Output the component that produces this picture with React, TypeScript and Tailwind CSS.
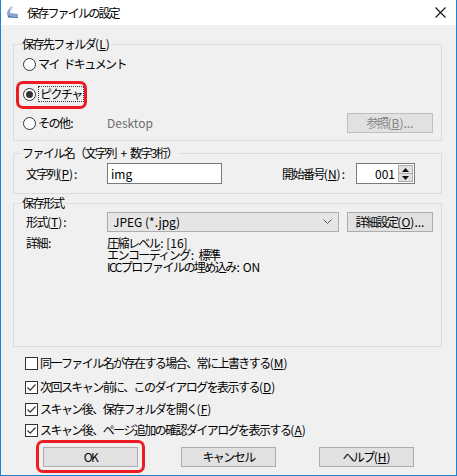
import React from 'react';

const Acc = ({ k }: { k: string }) => (
    <span className="tracking-normal">
        (<u className="underline underline-offset-[1px]">{k}</u>)
    </span>
);

const Colon = () => <span className="tracking-normal ml-[1px]">:</span>;

const Radio = ({ checked }: { checked?: boolean }) => (
    <span className="w-[13px] h-[13px] rounded-full border border-[#333] bg-white flex items-center justify-center shrink-0">
        {checked && <span className="w-[7px] h-[7px] rounded-full bg-[#333]" />}
    </span>
);

const Check = ({ checked }: { checked?: boolean }) => (
    <span className="w-[13px] h-[13px] border border-[#333] bg-white flex items-center justify-center shrink-0">
        {checked && (
            <svg width="11" height="11" viewBox="0 0 11 11">
                <path d="M1.5 5.5 L4.2 8.2 L9.5 2.5" fill="none" stroke="#333" strokeWidth="1.2" />
            </svg>
        )}
    </span>
);

const Btn = ({ children, className = '' }: { children: React.ReactNode; className?: string }) => (
    <button className={`h-[20px] border border-[#adadad] bg-[#e1e1e1] flex items-center justify-center text-[#000] ${className}`}>
        {children}
    </button>
);

const Legend = ({ children }: { children: React.ReactNode }) => (
    <legend className="ml-[7px] px-[1px] leading-[16px]">{children}</legend>
);

export default function App() {
    return (
        <div className="w-[457px] h-[476px] flex flex-col bg-[#f0f0f0] border-x border-b border-[#1883d7] text-[12px] text-black tracking-[-0.13em] font-['Noto_Sans_CJK_JP','Noto_Sans',sans-serif] overflow-hidden">
            {/* title bar */}
            <div className="h-[25px] bg-white flex items-center shrink-0">
                <svg className="ml-[4px]" width="15" height="15" viewBox="0 0 15 15">
                    <path d="M6 1 L2 7 L4 11 L13 12 L13 9 L5 8 Z" fill="#8aa4cf" />
                    <path d="M2 7 L4 11 L13 12 L13 13 L3 12.5 Z" fill="#3f6fb6" />
                    <path d="M6 1 L8 2 L5 8 Z" fill="#c9d3e6" />
                </svg>
                <span className="ml-[7px] tracking-[-0.15em]">保存ファイルの設定</span>
                <svg className="ml-auto mr-[10px]" width="11" height="11" viewBox="0 0 11 11">
                    <path d="M0.5 0.5 L10.5 10.5 M10.5 0.5 L0.5 10.5" stroke="#111" strokeWidth="1.1" />
                </svg>
            </div>

            <div className="flex-1 flex flex-col pt-[11px] pl-[12px]">
                {/* group 1 */}
                <fieldset className="w-[429px] h-[105px] border border-[#dcdcdc] px-0">
                    <Legend>
                        保存先フォルダ<Acc k="L" />
                    </Legend>
                    <div className="mt-[2px] h-[20px] flex items-center pl-[9px] gap-[2px]">
                        <Radio />
                        <span>マイ{'\u2002'}ドキュメント</span>
                    </div>
                    <div className="relative mt-[10px] h-[20px] flex items-center pl-[9px] gap-[2px]">
                        <Radio checked />
                        <span className="border border-dotted border-[#333] px-[1px] leading-[14px]">ピクチャ</span>
                        <span className="absolute left-[2px] top-[-3px] w-[71px] h-[28px] border-[3px] border-[#ed1c24] rounded-[7px]" />
                    </div>
                    <div className="mt-[9px] h-[20px] flex items-center pl-[9px]">
                        <Radio />
                        <span className="ml-[2px] w-[69px]">
                            その他<Colon />
                        </span>
                        <span className="text-[#6d6d6d] tracking-normal">Desktop</span>
                        <Btn className="ml-auto mr-[8px] w-[86px] h-[19px] bg-[#cccccc] border-[#bfbfbf] !text-[#838383]">
                            参照<Acc k="B" />
                            <span className="tracking-normal">...</span>
                        </Btn>
                    </div>
                </fieldset>

                {/* group 2 */}
                <fieldset className="mt-[4px] w-[429px] h-[49px] border border-[#dcdcdc] px-0">
                    <Legend>ファイル名（文字列{'\u2002'}+{'\u2002'}数字3桁）</Legend>
                    <div className="mt-[2px] h-[21px] flex items-center pl-[12px]">
                        <span className="w-[81px]">
                            文字列<Acc k="P" />
                            <Colon />
                        </span>
                        <div className="w-[115px] h-[21px] border border-[#7a7a7a] bg-white flex items-center pl-[3px] tracking-normal">img</div>
                        <span className="ml-auto">
                            開始番号<Acc k="N" />
                            <Colon />
                        </span>
                        <div className="ml-[11px] mr-[26px] w-[59px] h-[21px] border border-[#7a7a7a] bg-white flex items-center">
                            <span className="flex-1 text-right pr-[3px] tracking-normal">001</span>
                            <div className="w-[15px] h-[17px] mr-[1px] flex flex-col border border-[#adadad] bg-[#e1e1e1]">
                                <div className="flex-1 flex items-center justify-center border-b border-[#adadad]">
                                    <svg width="7" height="4" viewBox="0 0 7 4"><path d="M0 4 L3.5 0 L7 4 Z" fill="#111" /></svg>
                                </div>
                                <div className="flex-1 flex items-center justify-center">
                                    <svg width="7" height="4" viewBox="0 0 7 4"><path d="M0 0 L3.5 4 L7 0 Z" fill="#111" /></svg>
                                </div>
                            </div>
                        </div>
                    </div>
                </fieldset>

                {/* group 3 */}
                <fieldset className="mt-[1px] w-[429px] h-[152px] border border-[#dcdcdc] px-0">
                    <Legend>保存形式</Legend>
                    <div className="mt-[1px] h-[20px] flex items-center pl-[12px]">
                        <span className="w-[81px]">
                            形式<Acc k="T" />
                            <Colon />
                        </span>
                        <div className="w-[232px] h-[20px] border border-[#adadad] bg-[#e5e5e5] flex items-center pl-[5px] tracking-normal">
                            <span className="flex-1">JPEG (*.jpg)</span>
                            <svg className="mr-[6px]" width="9" height="6" viewBox="0 0 9 6">
                                <path d="M0.5 0.5 L4.5 4.5 L8.5 0.5" fill="none" stroke="#555" strokeWidth="1" />
                            </svg>
                        </div>
                        <Btn className="ml-[8px] w-[86px] h-[20px]">
                            詳細設定<Acc k="O" />
                            <span className="tracking-normal">...</span>
                        </Btn>
                    </div>
                    <div className="mt-[5px] flex pl-[12px] leading-[12px]">
                        <div className="w-[81px]">
                            詳細<Colon />
                        </div>
                        <div className="flex flex-col">
                            <div>
                                圧縮レベル<Colon />
                                <span className="tracking-normal"> [16]</span>
                            </div>
                            <div>
                                エンコーディング<Colon />
                                {'\u2002'}標準
                            </div>
                            <div>
                                ICCプロファイルの埋め込み<Colon />
                                <span className="tracking-normal"> ON</span>
                            </div>
                        </div>
                    </div>
                </fieldset>

                {/* options */}
                <div className="mt-[6px] h-[20px] flex items-center pl-[12px] gap-[2px]">
                    <Check />
                    <span>
                        同一ファイル名が存在する場合、常に上書きする<Acc k="M" />
                    </span>
                </div>
                <div className="mt-[4px] h-[20px] flex items-center pl-[12px] gap-[2px]">
                    <Check checked />
                    <span>
                        次回スキャン前に、このダイアログを表示する<Acc k="D" />
                    </span>
                </div>
                <div className="mt-[2px] h-[20px] flex items-center pl-[12px] gap-[2px]">
                    <Check checked />
                    <span>
                        スキャン後、保存フォルダを開く<Acc k="F" />
                    </span>
                </div>
                <div className="mt-[1px] h-[20px] flex items-center pl-[12px] gap-[2px]">
                    <Check checked />
                    <span>
                        スキャン後、ページ追加の確認ダイアログを表示する<Acc k="A" />
                    </span>
                </div>

                {/* buttons */}
                <div className="mt-[7px] flex pl-[30px] gap-[43px]">
                    <div className="relative">
                        <Btn className="w-[95px] border-[#0078d7]">OK</Btn>
                        <span className="absolute left-[-7px] top-[-7px] w-[109px] h-[33px] border-[3px] border-[#ed1c24] rounded-[7px]" />
                    </div>
                    <Btn className="w-[95px]">キャンセル</Btn>
                    <Btn className="w-[95px]">
                        ヘルプ<Acc k="H" />
                    </Btn>
                </div>
            </div>
        </div>
    );
}
